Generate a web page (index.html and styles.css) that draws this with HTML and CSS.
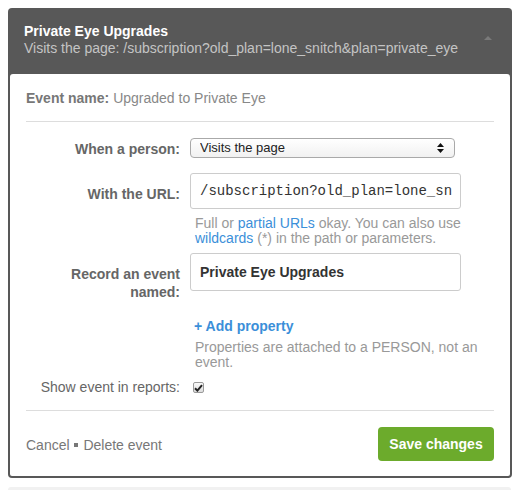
FILE: index.html
```html
<!DOCTYPE html>
<html lang="en">
<head>
    <meta charset="UTF-8">
    <meta name="viewport" content="width=device-width, initial-scale=1.0">
    <title>Edit Event</title>
    <link rel="stylesheet" href="styles.css">
</head>
<body>

<div class="card">
    <div class="card-head">
        <div>
            <div class="card-title">Private Eye Upgrades</div>
            <div class="card-sub">Visits the page: /subscription?old_plan=lone_snitch&amp;plan=private_eye</div>
        </div>
        <span class="caret"></span>
    </div>

    <div class="panel">
        <div class="event-name"><b>Event name:</b> Upgraded to Private Eye</div>
        <div class="rule"></div>

        <form id="eventForm">
            <div class="row row-select">
                <label for="action">When a person:</label>
                <div class="select-wrap">
                    <select id="action" name="action">
                        <option value="visit">Visits the page</option>
                        <option value="click">Clicks an element</option>
                    </select>
                    <svg class="select-arrows" width="7" height="10" viewBox="0 0 7 10">
                        <path d="M3.5 0 L7 4 L0 4 Z M0 6 L7 6 L3.5 10 Z" fill="#111"/>
                    </svg>
                </div>
            </div>

            <div class="row row-url">
                <label for="url">With the URL:</label>
                <input type="text" id="url" class="field mono" value="/subscription?old_plan=lone_snitch&amp;plan=private_eye">
            </div>
            <p class="help">Full or <a href="#">partial URLs</a> okay. You can also use <a href="#">wildcards</a> (*) in the path or parameters.</p>

            <div class="row row-name">
                <label for="eventName">Record an event named:</label>
                <input type="text" id="eventName" class="field strong" value="Private Eye Upgrades">
            </div>

            <a href="#" class="add-prop">+ Add property</a>
            <p class="help help-props">Properties are attached to a PERSON, not an event.</p>

            <div class="row row-check">
                <label for="showInReports" class="plain">Show event in reports:</label>
                <span class="checkbox" id="showInReports">
                    <svg width="9" height="8" viewBox="0 0 9 8">
                        <path d="M1 4.2 L3.4 6.6 L8 1.2" fill="none" stroke="#222" stroke-width="2"/>
                    </svg>
                </span>
            </div>

            <div class="rule rule-bottom"></div>

            <div class="footer">
                <div class="footer-links">
                    <a href="#">Cancel</a> <span class="dot"></span> <a href="#">Delete event</a>
                </div>
                <button type="submit">Save changes</button>
            </div>
        </form>
    </div>
</div>

<div class="card-next"></div>

</body>
</html>
```

FILE: styles.css
```css
body {
    font-family: 'Liberation Sans', Arial, sans-serif;
    font-size: 14px;
    background-color: #fff;
    margin: 8px;
    overflow: hidden;
}

.card {
    width: 504px;
    background-color: #585858;
    border-radius: 4px;
    padding: 0 2px 2px;
    box-sizing: border-box;
}

.card-head {
    display: flex;
    justify-content: space-between;
    padding: 15px 14px 17px;
    line-height: 17px;
}

.card-title {
    color: #fff;
    font-weight: bold;
}

.card-sub {
    color: #c4c4c4;
}

.caret {
    width: 0;
    height: 0;
    margin: 13px 4px 0 0;
    border-left: 4px solid transparent;
    border-right: 4px solid transparent;
    border-bottom: 4px solid #7a7a7a;
}

.panel {
    background-color: #fff;
    border-radius: 3px 3px 2px 2px;
    padding: 16px 16px 15px;
}

.event-name {
    color: #888;
    line-height: 17px;
}

.event-name b {
    color: #777;
}

.rule {
    height: 1px;
    background-color: #ddd;
    margin: 14px 0 15px;
}

.row {
    display: grid;
    grid-template-columns: 154px 1fr;
    column-gap: 10px;
    align-items: start;
}

.row label {
    text-align: right;
    font-weight: bold;
    color: #666;
    line-height: 18px;
    padding-top: 12px;
}

.row-select {
    align-items: center;
}

.row-select label {
    padding-top: 3px;
}

.select-wrap {
    position: relative;
    width: 265px;
}

select {
    -webkit-appearance: none;
    appearance: none;
    width: 100%;
    height: 20px;
    padding: 0 0 0 9px;
    border: 1px solid #a9a9a9;
    border-radius: 4px;
    background: linear-gradient(#fff, #f1f1f1);
    font-family: 'Liberation Sans', Arial, sans-serif;
    font-size: 13px;
    color: #222;
    display: block;
}

.select-arrows {
    position: absolute;
    right: 11px;
    top: 5px;
    pointer-events: none;
}

.field {
    width: 271px;
    border: 1px solid #ccc;
    border-radius: 3px;
    box-sizing: border-box;
    color: #333;
    outline: none;
}

.mono {
    height: 36px;
    padding: 0 8px 0 9px;
    font-family: 'Liberation Mono', 'Courier New', monospace;
    font-size: 14px;
}

.strong {
    height: 38px;
    padding: 0 9px;
    font-family: 'Liberation Sans', Arial, sans-serif;
    font-size: 14px;
    font-weight: bold;
}

.row-url {
    margin-top: 15px;
}

.row-name {
    margin-top: 7px;
}

.help {
    margin: 7px 0 0 169px;
    width: 285px;
    color: #999;
    line-height: 15px;
}

.help a {
    color: #3b8fd9;
    text-decoration: none;
}

.add-prop {
    display: block;
    margin: 17px 0 0 168px;
    color: #3b8fd9;
    font-weight: bold;
    text-decoration: none;
    line-height: 17px;
}

.help-props {
    margin-top: 5px;
    width: 300px;
}

.row-check {
    margin-top: 9px;
    align-items: center;
}

.row-check label.plain {
    font-weight: normal;
    padding-top: 0;
    line-height: 17px;
}

.checkbox {
    width: 11px;
    height: 11px;
    margin-left: 3px;
    border: 1px solid #9a9a9a;
    border-radius: 2px;
    background: linear-gradient(#fafafa, #dcdcdc);
    box-sizing: border-box;
    display: flex;
    align-items: center;
    justify-content: center;
}

.rule-bottom {
    margin: 14px 0 16px;
}

.footer {
    display: flex;
    justify-content: space-between;
    align-items: center;
}

.footer-links {
    color: #777;
    margin-top: 2px;
}

.footer-links a {
    color: #777;
    text-decoration: none;
}

.dot {
    display: inline-block;
    width: 4px;
    height: 4px;
    background-color: #777;
    vertical-align: middle;
    margin: 0 1px 2px;
}

button {
    background-color: #6cab2c;
    color: #fff;
    font-family: 'Liberation Sans', Arial, sans-serif;
    font-size: 14px;
    font-weight: bold;
    height: 34px;
    width: 116px;
    border: none;
    border-radius: 4px;
    cursor: pointer;
}

.card-next {
    width: 503px;
    height: 3px;
    margin-top: 9px;
    background-color: #f1f1f1;
    border-radius: 4px 4px 0 0;
}
```
